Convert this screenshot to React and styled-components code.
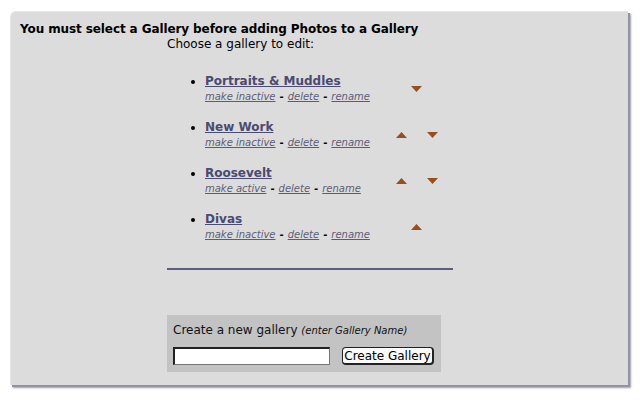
import React from "react";
import styled, { createGlobalStyle } from "styled-components";

const GlobalStyle = createGlobalStyle`
  html, body {
    margin: 0;
    padding: 0;
    background: #ffffff;
    font-family: "DejaVu Sans", Verdana, sans-serif;
  }
`;

const galleries = [
  { name: "Portraits & Muddles", status: "make inactive", up: false, down: true },
  { name: "New Work", status: "make inactive", up: true, down: true },
  { name: "Roosevelt", status: "make active", up: true, down: true },
  { name: "Divas", status: "make inactive", up: true, down: false },
];

const Page = styled.div`
  padding: 11px 0 0 10px;
  width: 641px;
  height: 400px;
  box-sizing: border-box;
`;

const Panel = styled.div`
  width: 618px;
  height: 374px;
  box-sizing: border-box;
  background: #dcdcdc;
  border-top-left-radius: 6px;
  border-top: 1px solid #e6e6e6;
  border-left: 1px solid #e6e6e6;
  box-shadow: 2px 2px 0 #9393a6, 3px 3px 2px rgba(90, 90, 120, 0.6);
  padding: 10px 0 0 9px;
`;

const Heading = styled.div`
  font-size: 12px;
  font-weight: bold;
  color: #000;
  line-height: 14px;
  letter-spacing: -0.1px;
`;

const Column = styled.div`
  margin-left: 147px;
  width: 286px;
`;

const Intro = styled.div`
  font-size: 12px;
  color: #000;
  line-height: 14px;
  margin-top: 1px;
`;

const List = styled.div`
  margin-top: 23px;
  display: flex;
  flex-direction: column;
  gap: 18px;
`;

const Row = styled.div`
  display: flex;
  align-items: center;
  height: 28px;
`;

const Entry = styled.div`
  position: relative;
  padding-left: 38px;
  width: 190px;

  &::before {
    content: "";
    position: absolute;
    left: 24px;
    top: 6px;
    width: 4px;
    height: 4px;
    border-radius: 50%;
    background: #000;
  }
`;

const Title = styled.a`
  display: block;
  font-size: 12px;
  font-weight: bold;
  color: #4a4a72;
  text-decoration: underline;
  line-height: 15px;
`;

const Actions = styled.div`
  font-size: 10px;
  line-height: 13px;
  color: #000;
  margin-top: 1px;
`;

const Action = styled.a`
  font-style: italic;
  color: #5c5c78;
  text-decoration: underline;
`;

const Sep = styled.span`
  margin: 0 4px;
  font-weight: bold;
`;

const Arrows = styled.div`
  width: 43px;
  display: flex;
  justify-content: center;
  align-items: center;
  gap: 20px;
  margin-top: 2px;
`;

const Arrow = ({ dir }) => (
  <svg width="11" height="6" viewBox="0 0 11 6">
    {dir === "up" ? (
      <polygon points="0,6 11,6 5.5,0" fill="#9a4d1e" />
    ) : (
      <polygon points="0,0 11,0 5.5,6" fill="#9a4d1e" />
    )}
  </svg>
);

const Rule = styled.div`
  margin-top: 28px;
  height: 2px;
  background: #5d5d82;
`;

const CreateBox = styled.div`
  margin-top: 45px;
  width: 274px;
  height: 57px;
  box-sizing: border-box;
  background: #c3c3c3;
  padding: 8px 6px 0 6px;
`;

const CreateLabel = styled.div`
  font-size: 12px;
  color: #111;
  line-height: 15px;

  em {
    font-size: 10px;
  }
`;

const FormRow = styled.div`
  display: flex;
  align-items: center;
  gap: 12px;
  margin-top: 9px;
`;

const NameInput = styled.input`
  width: 157px;
  height: 18px;
  box-sizing: border-box;
  border: 1px solid #777;
  border-top: 2px solid #222;
  border-left: 2px solid #222;
  background: #fff;
  padding: 0 2px;
  margin: 0;
`;

const Button = styled.button`
  height: 18px;
  width: 92px;
  box-sizing: border-box;
  background: #fafafa;
  border: 1px solid #222;
  border-right: 2px solid #222;
  border-bottom: 2px solid #222;
  border-radius: 4px;
  font-family: "DejaVu Sans", Verdana, sans-serif;
  font-size: 12px;
  color: #000;
  padding: 0;
  line-height: 14px;
`;

export default function App() {
  return (
    <>
      <GlobalStyle />
      <Page>
        <Panel>
          <Heading>You must select a Gallery before adding Photos to a Gallery</Heading>
          <Column>
            <Intro>Choose a gallery to edit:</Intro>
            <List>
              {galleries.map((g) => (
                <Row key={g.name}>
                  <Entry>
                    <Title>{g.name}</Title>
                    <Actions>
                      <Action>{g.status}</Action>
                      <Sep>-</Sep>
                      <Action>delete</Action>
                      <Sep>-</Sep>
                      <Action>rename</Action>
                    </Actions>
                  </Entry>
                  <Arrows>
                    {g.up && <Arrow dir="up" />}
                    {g.down && <Arrow dir="down" />}
                  </Arrows>
                </Row>
              ))}
            </List>
            <Rule />
            <CreateBox>
              <CreateLabel>
                Create a new gallery <em>(enter Gallery Name)</em>
              </CreateLabel>
              <FormRow>
                <NameInput type="text" />
                <Button>Create Gallery</Button>
              </FormRow>
            </CreateBox>
          </Column>
        </Panel>
      </Page>
    </>
  );
}
